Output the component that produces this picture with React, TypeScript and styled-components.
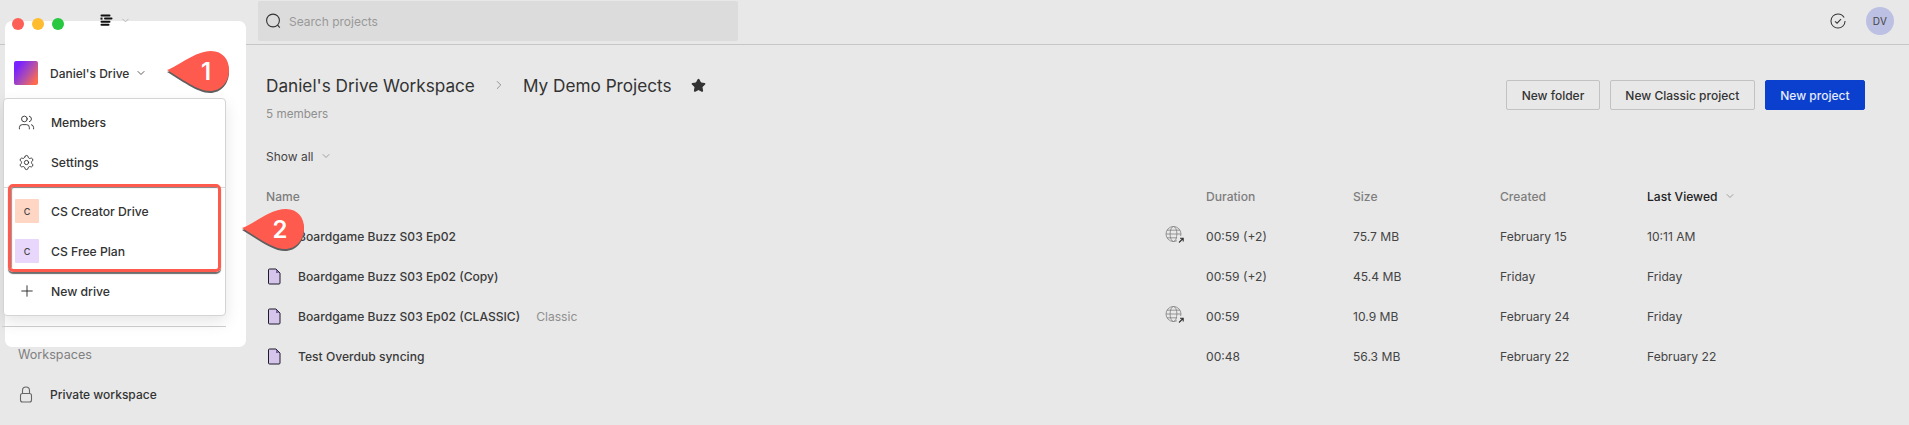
import React from "react";
import styled, { createGlobalStyle } from "styled-components";
import { ChevronDown, ChevronRight, Plus, Settings, Star, Users } from "lucide-react";

const Global = createGlobalStyle`
  html, body { margin: 0; padding: 0; background: #e8e8e8; }
  body { font-family: Inter, "Liberation Sans", sans-serif; color: #333; overflow: hidden; }
`;

const Page = styled.div`
  position: relative;
  width: 1909px;
  height: 425px;
  overflow: hidden;
  background: #e8e8e8;
  display: flex;
  flex-direction: column;
`;

const TopBar = styled.header`
  height: 45px;
  box-sizing: border-box;
  flex: none;
  border-bottom: 1px solid #c6c6c6;
  display: flex;
  align-items: flex-start;
  padding: 1px 0 0 258px;
`;

const SearchBox = styled.div`
  width: 480px;
  height: 40px;
  background: #dcdcdc;
  border-radius: 2px;
  display: flex;
  align-items: center;
  gap: 7px;
  padding-left: 7px;
  box-sizing: border-box;
  font-size: 12px;
  color: #999;
`;

const TopRight = styled.div`
  margin-left: auto;
  display: flex;
  align-items: center;
  gap: 20px;
  padding: 6px 15px 0 0;
`;

const Avatar = styled.div`
  width: 28px;
  height: 28px;
  border-radius: 50%;
  background: #bcc0e2;
  color: #444;
  font-size: 10px;
  letter-spacing: 0.3px;
  display: flex;
  align-items: center;
  justify-content: center;
`;

const Body = styled.div`
  flex: 1;
  display: flex;
`;

const Rail = styled.aside`
  width: 266px;
  flex: none;
  padding: 300px 0 0 18px;
  box-sizing: border-box;
`;

const RailLabel = styled.div`
  font-size: 12.6px;
  color: #808080;
  height: 20px;
  line-height: 20px;
`;

const RailItem = styled.div`
  margin-top: 19px;
  display: flex;
  align-items: center;
  gap: 16px;
  font-size: 12px;
  font-weight: 500;
  color: #333;
  height: 20px;
`;

const Main = styled.main`
  flex: 1;
  min-width: 0;
  padding: 0 44px 0 0;
`;

const Head = styled.div`
  display: flex;
  justify-content: space-between;
  align-items: flex-start;
  padding-top: 26px;
`;

const Crumbs = styled.div`
  display: flex;
  align-items: center;
  height: 28px;
  font-size: 17.2px;
  color: #333;
`;

const CrumbSep = styled.span`
  display: flex;
  width: 48px;
  justify-content: center;
  color: #777;
`;

const StarWrap = styled.span`
  display: flex;
  margin-left: 19px;
`;

const Members = styled.div`
  margin-top: 6px;
  font-size: 11.7px;
  line-height: 18px;
  color: #8f8f8f;
`;

const Buttons = styled.div`
  display: flex;
  gap: 10px;
  margin-top: 9px;
`;

const Btn = styled.button<{ $primary?: boolean }>`
  height: 30px;
  box-sizing: border-box;
  padding: 0 14.5px;
  border-radius: 2px;
  border: 1px solid ${(p) => (p.$primary ? "#0b40cf" : "#c2c2c2")};
  background: ${(p) => (p.$primary ? "#0b40cf" : "transparent")};
  color: ${(p) => (p.$primary ? "#e8ecfa" : "#333")};
  font: 500 12px Inter, "Liberation Sans", sans-serif;
`;

const ShowAll = styled.div`
  margin-top: 23px;
  height: 20px;
  display: flex;
  align-items: center;
  gap: 6px;
  font-size: 12px;
  color: #444;
`;

const Row = styled.div<{ $head?: boolean }>`
  display: grid;
  grid-template-columns: 32px 867px 41px 147px 147px 147px 1fr;
  align-items: center;
  height: 40px;
  font-size: 12.1px;
  color: #444;
  ${(p) => p.$head && "margin-top: 10px; color: #7e7e7e; font-weight: 500;"}
`;

const NameCell = styled.span`
  font-weight: 500;
  color: #3a3a3a;
  display: flex;
  gap: 16px;
`;

const Tag = styled.span`
  font-weight: 400;
  color: #8f8f8f;
`;

const SortHead = styled.span`
  color: #222;
  font-weight: 500;
  display: flex;
  align-items: center;
  gap: 6px;
`;

const HeadName = styled.span`
  grid-column: 1 / 3;
`;

const Sheet = styled.div`
  position: absolute;
  left: 5px;
  top: 21px;
  width: 241px;
  height: 326px;
  background: #fff;
  border-radius: 7px;
`;

const Lights = styled.div`
  position: absolute;
  left: 12px;
  top: 18px;
  display: flex;
  gap: 8px;
`;

const Light = styled.span<{ $c: string }>`
  width: 12px;
  height: 12px;
  border-radius: 50%;
  background: ${(p) => p.$c};
`;

const AppMenu = styled.div`
  position: absolute;
  left: 100px;
  top: 14px;
  display: flex;
  align-items: center;
  gap: 7px;
  color: #999;
`;

const DriveButton = styled.div`
  position: absolute;
  left: 14px;
  top: 61px;
  display: flex;
  align-items: center;
  font-size: 12px;
  font-weight: 500;
  color: #333;
`;

const DriveLogo = styled.span`
  width: 24px;
  height: 24px;
  border-radius: 2px;
  margin-right: 12px;
  background: linear-gradient(125deg, #7a22ff 18%, #b04fae 55%, #ff6a4d 88%);
`;

const DriveChevron = styled.span`
  display: flex;
  margin-left: 6px;
`;

const Menu = styled.div`
  position: absolute;
  left: 3px;
  top: 98px;
  width: 223px;
  height: 218px;
  box-sizing: border-box;
  background: #fff;
  border: 1px solid #d4d4d4;
  border-radius: 4px;
  box-shadow: 0 6px 16px rgba(0, 0, 0, 0.1);
  padding-top: 3px;
`;

const MenuItem = styled.div`
  height: 40px;
  display: flex;
  align-items: center;
  font-size: 12.2px;
  font-weight: 500;
  color: #333;
`;

const MenuIcon = styled.span`
  width: 47px;
  flex: none;
  display: flex;
  justify-content: center;
  padding-right: 2px;
  box-sizing: border-box;
  color: #222;
`;

const Tile = styled.span<{ $c: string }>`
  width: 24px;
  height: 24px;
  margin: 0 12px 0 11px;
  flex: none;
  border-radius: 1px;
  background: ${(p) => p.$c};
  font-size: 9px;
  color: #444;
  display: flex;
  align-items: center;
  justify-content: center;
`;

const MenuRule = styled.div`
  height: 1px;
  background: #d8d8d8;
  margin: 5px 0 3px;
`;

const SheetRule = styled.div`
  position: absolute;
  left: 2px;
  top: 326px;
  width: 224px;
  height: 1px;
  background: #cfcfcf;
`;

const RedBox = styled.div`
  position: absolute;
  left: 8px;
  top: 184px;
  width: 213px;
  height: 88px;
  box-sizing: border-box;
  border: 3px solid #fe5a4d;
  border-radius: 5px;
  box-shadow: 0 2px 1px rgba(60, 60, 60, 0.75), inset 1px 1px 1px rgba(60, 60, 60, 0.55);
`;

const Callout = styled.svg<{ $x: number; $y: number }>`
  position: absolute;
  left: ${(p) => p.$x}px;
  top: ${(p) => p.$y}px;
  overflow: visible;
`;

const CalloutDigit = styled.span<{ $x: number; $y: number }>`
  position: absolute;
  left: ${(p) => p.$x}px;
  top: ${(p) => p.$y}px;
  width: 30px;
  text-align: center;
  font-size: 24px;
  line-height: 30px;
  font-weight: 600;
  color: #fff;
`;

const FileIcon = styled.svg`
  margin-left: 2px;
`;

const SearchGlyph = () => (
  <svg width="17" height="17" viewBox="0 0 17 17" fill="none" stroke="#333" strokeWidth="1.1">
    <circle cx="8" cy="7.5" r="6.4" />
    <path d="M12.6 12.2l2.2 2.4" />
  </svg>
);

const LockGlyph = () => (
  <svg width="16" height="17" viewBox="0 0 16 17" fill="none" stroke="#666" strokeWidth="1.1">
    <path d="M4.5 7.5V4.5a3.5 3.5 0 0 1 7 0v3" />
    <rect x="2.5" y="7.5" width="11" height="8.5" rx="2" />
  </svg>
);

const FileGlyph = () => (
  <FileIcon width="13" height="17" viewBox="0 0 13 17" fill="none">
    <path d="M1.5 1h6.5L12 5v10a1 1 0 0 1-1 1H1.5a1 1 0 0 1-1-1V2a1 1 0 0 1 1-1z" fill="#d6c5ea" stroke="#1d1a2a" strokeWidth="1" />
    <path d="M8 1.5v3.5h3.6z" fill="#7b63a3" />
  </FileIcon>
);

const GlobeLink = () => (
  <svg width="20" height="18" viewBox="0 0 20 18" fill="none" stroke="#808080" strokeWidth="0.8">
    <circle cx="8.5" cy="8" r="7.5" />
    <ellipse cx="8.5" cy="8" rx="3.4" ry="7.5" />
    <path d="M1 8h15M2 4.2h13M2 11.8h13" />
    <rect x="12" y="10" width="8" height="8" fill="#e8e8e8" stroke="none" />
    <path d="M14 16.5l4-4M15 12.3h3.2v3.2" stroke="#333" strokeWidth="1.1" />
  </svg>
);

const CheckCircle = () => (
  <svg width="16" height="16" viewBox="0 0 17 17" fill="none" stroke="#333" strokeWidth="1.1">
    <circle cx="8.5" cy="8.5" r="7.5" strokeDasharray="43 4" />
    <path d="M5.3 8.8l2.2 2 4.2-4.4" />
  </svg>
);

const LogoMark = () => (
  <svg width="13" height="13" viewBox="0 0 13 13" fill="#111">
    <rect x="0.5" y="0.5" width="10" height="2" rx="1" />
    <rect x="4" y="3.6" width="8.5" height="2" rx="1" />
    <rect x="0.5" y="6.7" width="10" height="2" rx="1" />
    <rect x="0.5" y="9.8" width="9" height="2" rx="1" />
    <rect x="0.5" y="3.6" width="2" height="2" />
  </svg>
);

const Pin = ({ x, y }: { x: number; y: number }) => (
  <Callout $x={x} $y={y} width="64" height="44" viewBox="0 0 64 44">
    <path d="M0 20 C 12 16 28 1 44 1 C 56 1 62 10 62 20 C 62 32 54 41 43 41 C 30 41 14 28 0 20 Z" fill="#5f5f5f" transform="translate(0 2)" />
    <path d="M0 20 C 12 16 28 1 44 1 C 56 1 62 10 62 20 C 62 32 54 41 43 41 C 30 41 14 28 0 20 Z" fill="#fe5a4d" />
  </Callout>
);

const rows = [
  { name: "Boardgame Buzz S03 Ep02", globe: true, dur: "00:59 (+2)", size: "75.7 MB", created: "February 15", viewed: "10:11 AM" },
  { name: "Boardgame Buzz S03 Ep02 (Copy)", dur: "00:59 (+2)", size: "45.4 MB", created: "Friday", viewed: "Friday" },
  { name: "Boardgame Buzz S03 Ep02 (CLASSIC)", tag: "Classic", globe: true, dur: "00:59", size: "10.9 MB", created: "February 24", viewed: "Friday" },
  { name: "Test Overdub syncing", dur: "00:48", size: "56.3 MB", created: "February 22", viewed: "February 22" },
];

export default function App() {
  return (
    <Page>
      <Global />
      <TopBar>
        <SearchBox>
          <SearchGlyph />
          Search projects
        </SearchBox>
        <TopRight>
          <CheckCircle />
          <Avatar>DV</Avatar>
        </TopRight>
      </TopBar>
      <Body>
        <Rail>
          <RailLabel>Workspaces</RailLabel>
          <RailItem>
            <LockGlyph />
            Private workspace
          </RailItem>
        </Rail>
        <Main>
          <Head>
            <div>
              <Crumbs>
                Daniel's Drive Workspace
                <CrumbSep>
                  <ChevronRight size={14} strokeWidth={1.3} />
                </CrumbSep>
                My Demo Projects
                <StarWrap>
                  <Star size={15} fill="#333" color="#333" />
                </StarWrap>
              </Crumbs>
              <Members>5 members</Members>
            </div>
            <Buttons>
              <Btn>New folder</Btn>
              <Btn>New Classic project</Btn>
              <Btn $primary>New project</Btn>
            </Buttons>
          </Head>
          <ShowAll>
            Show all
            <ChevronDown size={12} strokeWidth={1.3} color="#777" />
          </ShowAll>
          <Row $head>
            <HeadName>Name</HeadName>
            <span />
            <span>Duration</span>
            <span>Size</span>
            <span>Created</span>
            <SortHead>
              Last Viewed
              <ChevronDown size={12} strokeWidth={1.3} color="#777" />
            </SortHead>
          </Row>
          {rows.map((r) => (
            <Row key={r.name}>
              <FileGlyph />
              <NameCell>
                {r.name}
                {r.tag && <Tag>{r.tag}</Tag>}
              </NameCell>
              <span>{r.globe && <GlobeLink />}</span>
              <span>{r.dur}</span>
              <span>{r.size}</span>
              <span>{r.created}</span>
              <span>{r.viewed}</span>
            </Row>
          ))}
        </Main>
      </Body>

      <Sheet />
      <Lights>
        <Light $c="#fe5f57" />
        <Light $c="#febc2e" />
        <Light $c="#28c840" />
      </Lights>
      <AppMenu>
        <LogoMark />
        <ChevronDown size={11} strokeWidth={1.4} />
      </AppMenu>
      <DriveButton>
        <DriveLogo />
        Daniel's Drive
        <DriveChevron>
          <ChevronDown size={12} strokeWidth={1.6} />
        </DriveChevron>
      </DriveButton>
      <SheetRule />
      <Menu>
        <MenuItem>
          <MenuIcon>
            <Users size={17} strokeWidth={1.2} />
          </MenuIcon>
          Members
        </MenuItem>
        <MenuItem>
          <MenuIcon>
            <Settings size={17} strokeWidth={1.2} />
          </MenuIcon>
          Settings
        </MenuItem>
        <MenuRule />
        <MenuItem>
          <Tile $c="#ffd5c4">C</Tile>
          CS Creator Drive
        </MenuItem>
        <MenuItem>
          <Tile $c="#e8d6fb">C</Tile>
          CS Free Plan
        </MenuItem>
        <MenuItem>
          <MenuIcon>
            <Plus size={18} strokeWidth={1.2} />
          </MenuIcon>
          New drive
        </MenuItem>
      </Menu>
      <RedBox />
      <Pin x={167} y={50} />
      <CalloutDigit $x={191} $y={57}>1</CalloutDigit>
      <Pin x={242} y={208} />
      <CalloutDigit $x={265} $y={215}>2</CalloutDigit>
    </Page>
  );
}
